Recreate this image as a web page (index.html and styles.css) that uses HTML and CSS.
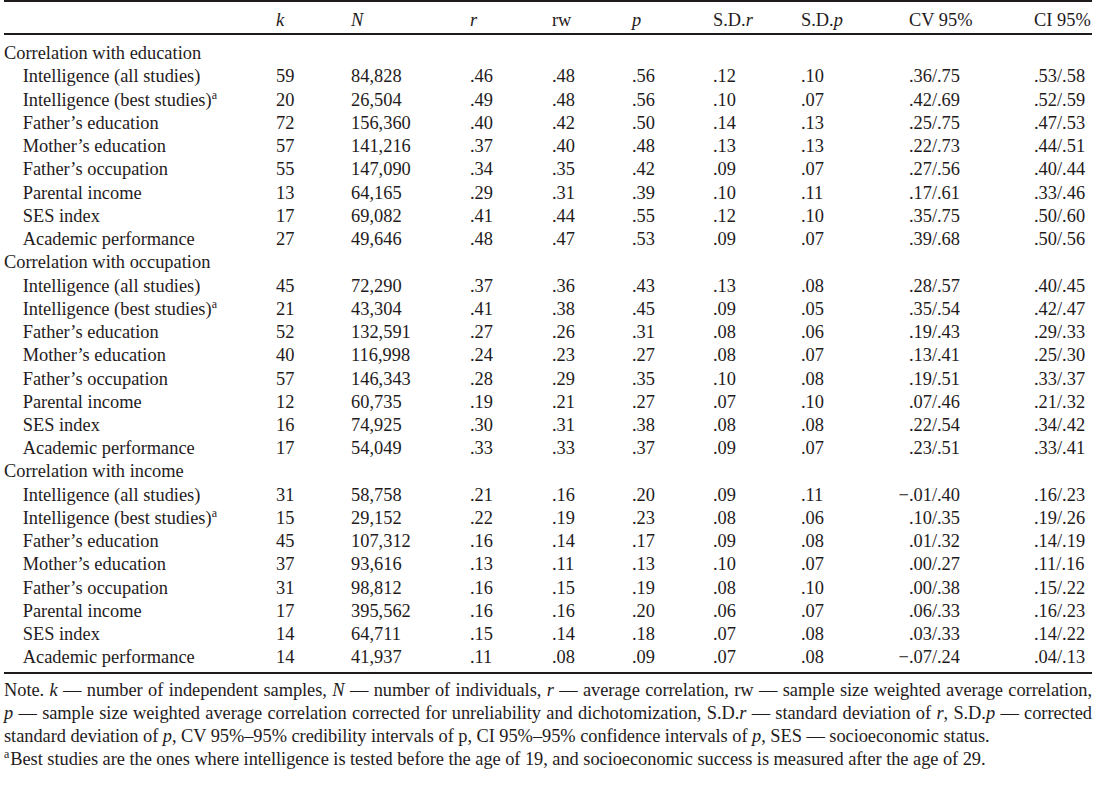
FILE: index.html
```html
<!DOCTYPE html>
<html lang="en">
<head>
<meta charset="utf-8">
<title>Correlations table</title>
<link rel="stylesheet" href="styles.css">
</head>
<body>
<div class="page">
<table class="data">
<colgroup>
<col class="c-label"><col class="c-k"><col class="c-n"><col class="c-r"><col class="c-rw"><col class="c-p"><col class="c-sdr"><col class="c-sdp"><col class="c-cv"><col class="c-ci">
</colgroup>
<thead>
<tr>
<th></th><th><i>k</i></th><th><i>N</i></th><th><i>r</i></th><th>rw</th><th><i>p</i></th><th>S.D.<i>r</i></th><th>S.D.<i>p</i></th><th class="cvh">CV 95%</th><th>CI 95%</th>
</tr>
</thead>
<tbody>
<tr class="first"><td class="sec" colspan="10">Correlation with education</td></tr>
<tr><td class="item">Intelligence (all studies)</td><td>59</td><td>84,828</td><td>.46</td><td>.48</td><td>.56</td><td>.12</td><td>.10</td><td class="cv">.36/.75</td><td>.53/.58</td></tr>
<tr><td class="item">Intelligence (best studies)<sup class="fn">a</sup></td><td>20</td><td>26,504</td><td>.49</td><td>.48</td><td>.56</td><td>.10</td><td>.07</td><td class="cv">.42/.69</td><td>.52/.59</td></tr>
<tr><td class="item">Father’s education</td><td>72</td><td>156,360</td><td>.40</td><td>.42</td><td>.50</td><td>.14</td><td>.13</td><td class="cv">.25/.75</td><td>.47/.53</td></tr>
<tr><td class="item">Mother’s education</td><td>57</td><td>141,216</td><td>.37</td><td>.40</td><td>.48</td><td>.13</td><td>.13</td><td class="cv">.22/.73</td><td>.44/.51</td></tr>
<tr><td class="item">Father’s occupation</td><td>55</td><td>147,090</td><td>.34</td><td>.35</td><td>.42</td><td>.09</td><td>.07</td><td class="cv">.27/.56</td><td>.40/.44</td></tr>
<tr><td class="item">Parental income</td><td>13</td><td>64,165</td><td>.29</td><td>.31</td><td>.39</td><td>.10</td><td>.11</td><td class="cv">.17/.61</td><td>.33/.46</td></tr>
<tr><td class="item">SES index</td><td>17</td><td>69,082</td><td>.41</td><td>.44</td><td>.55</td><td>.12</td><td>.10</td><td class="cv">.35/.75</td><td>.50/.60</td></tr>
<tr><td class="item">Academic performance</td><td>27</td><td>49,646</td><td>.48</td><td>.47</td><td>.53</td><td>.09</td><td>.07</td><td class="cv">.39/.68</td><td>.50/.56</td></tr>
<tr><td class="sec" colspan="10">Correlation with occupation</td></tr>
<tr><td class="item">Intelligence (all studies)</td><td>45</td><td>72,290</td><td>.37</td><td>.36</td><td>.43</td><td>.13</td><td>.08</td><td class="cv">.28/.57</td><td>.40/.45</td></tr>
<tr><td class="item">Intelligence (best studies)<sup class="fn">a</sup></td><td>21</td><td>43,304</td><td>.41</td><td>.38</td><td>.45</td><td>.09</td><td>.05</td><td class="cv">.35/.54</td><td>.42/.47</td></tr>
<tr><td class="item">Father’s education</td><td>52</td><td>132,591</td><td>.27</td><td>.26</td><td>.31</td><td>.08</td><td>.06</td><td class="cv">.19/.43</td><td>.29/.33</td></tr>
<tr><td class="item">Mother’s education</td><td>40</td><td>116,998</td><td>.24</td><td>.23</td><td>.27</td><td>.08</td><td>.07</td><td class="cv">.13/.41</td><td>.25/.30</td></tr>
<tr><td class="item">Father’s occupation</td><td>57</td><td>146,343</td><td>.28</td><td>.29</td><td>.35</td><td>.10</td><td>.08</td><td class="cv">.19/.51</td><td>.33/.37</td></tr>
<tr><td class="item">Parental income</td><td>12</td><td>60,735</td><td>.19</td><td>.21</td><td>.27</td><td>.07</td><td>.10</td><td class="cv">.07/.46</td><td>.21/.32</td></tr>
<tr><td class="item">SES index</td><td>16</td><td>74,925</td><td>.30</td><td>.31</td><td>.38</td><td>.08</td><td>.08</td><td class="cv">.22/.54</td><td>.34/.42</td></tr>
<tr><td class="item">Academic performance</td><td>17</td><td>54,049</td><td>.33</td><td>.33</td><td>.37</td><td>.09</td><td>.07</td><td class="cv">.23/.51</td><td>.33/.41</td></tr>
<tr><td class="sec" colspan="10">Correlation with income</td></tr>
<tr><td class="item">Intelligence (all studies)</td><td>31</td><td>58,758</td><td>.21</td><td>.16</td><td>.20</td><td>.09</td><td>.11</td><td class="cv">−.01/.40</td><td>.16/.23</td></tr>
<tr><td class="item">Intelligence (best studies)<sup class="fn">a</sup></td><td>15</td><td>29,152</td><td>.22</td><td>.19</td><td>.23</td><td>.08</td><td>.06</td><td class="cv">.10/.35</td><td>.19/.26</td></tr>
<tr><td class="item">Father’s education</td><td>45</td><td>107,312</td><td>.16</td><td>.14</td><td>.17</td><td>.09</td><td>.08</td><td class="cv">.01/.32</td><td>.14/.19</td></tr>
<tr><td class="item">Mother’s education</td><td>37</td><td>93,616</td><td>.13</td><td>.11</td><td>.13</td><td>.10</td><td>.07</td><td class="cv">.00/.27</td><td>.11/.16</td></tr>
<tr><td class="item">Father’s occupation</td><td>31</td><td>98,812</td><td>.16</td><td>.15</td><td>.19</td><td>.08</td><td>.10</td><td class="cv">.00/.38</td><td>.15/.22</td></tr>
<tr><td class="item">Parental income</td><td>17</td><td>395,562</td><td>.16</td><td>.16</td><td>.20</td><td>.06</td><td>.07</td><td class="cv">.06/.33</td><td>.16/.23</td></tr>
<tr><td class="item">SES index</td><td>14</td><td>64,711</td><td>.15</td><td>.14</td><td>.18</td><td>.07</td><td>.08</td><td class="cv">.03/.33</td><td>.14/.22</td></tr>
<tr class="last"><td class="item">Academic performance</td><td>14</td><td>41,937</td><td>.11</td><td>.08</td><td>.09</td><td>.07</td><td>.08</td><td class="cv">−.07/.24</td><td>.04/.13</td></tr>
</tbody>
</table>
<div class="note">
<div class="line just">Note. <i>k</i> — number of independent samples, <i>N</i> — number of individuals, <i>r</i> — average correlation, rw — sample size weighted average correlation,</div>
<div class="line just"><i>p</i> — sample size weighted average correlation corrected for unreliability and dichotomization, S.D.<i>r</i> — standard deviation of <i>r</i>, S.D.<i>p</i> — corrected</div>
<div class="line">standard deviation of <i>p</i>, CV 95%–95% credibility intervals of p, CI 95%–95% confidence intervals of <i>p</i>, SES — socioeconomic status.</div>
<div class="line"><sup class="fn lead">a</sup>Best studies are the ones where intelligence is tested before the age of 19, and socioeconomic success is measured after the age of 29.</div>
</div>
</div>
</body>
</html>
```

FILE: styles.css
```css
html, body {
  margin: 0;
  padding: 0;
  background: #ffffff;
}

.page {
  width: 1088px;
  margin-left: 4px;
  font-family: "Liberation Serif", "Times New Roman", serif;
  font-size: 18.4px;
  line-height: 23.23px;
  color: #1f1b1c;
}

.data {
  width: 1088px;
  table-layout: fixed;
  border-collapse: separate;
  border-spacing: 0;
}

.c-label { width: 272px; }
.c-k { width: 75px; }
.c-n { width: 119px; }
.c-r { width: 82px; }
.c-rw { width: 80px; }
.c-p { width: 81px; }
.c-sdr { width: 88px; }
.c-sdp { width: 97px; }
.c-cv { width: 136px; }
.c-ci { width: 58px; }

.data th,
.data td {
  padding: 0;
  text-align: left;
  font-weight: normal;
  white-space: nowrap;
  vertical-align: top;
}

.data th {
  border-top: 2px solid #1f1b1c;
  border-bottom: 2px solid #1f1b1c;
  padding-top: 6.7px;
  padding-bottom: 1.3px;
}

.data th.cvh {
  padding-left: 11px;
}

.data td.cv {
  text-align: right;
  padding-right: 74px;
}

.data td.item {
  padding-left: 18.7px;
}

.data tr.first td {
  padding-top: 7px;
}

.data tr.last td {
  padding-bottom: 2.6px;
  border-bottom: 2px solid #1f1b1c;
}

.fn {
  font-size: 12px;
  line-height: 0;
  vertical-align: 7px;
}

.fn.lead {
  margin-right: 1px;
}

.note {
  margin-top: 5.2px;
  line-height: 22.9px;
  letter-spacing: -0.05px;
}

.note .line {
  white-space: nowrap;
}

.note .line.just {
  white-space: normal;
  text-align: justify;
  text-align-last: justify;
}
```
